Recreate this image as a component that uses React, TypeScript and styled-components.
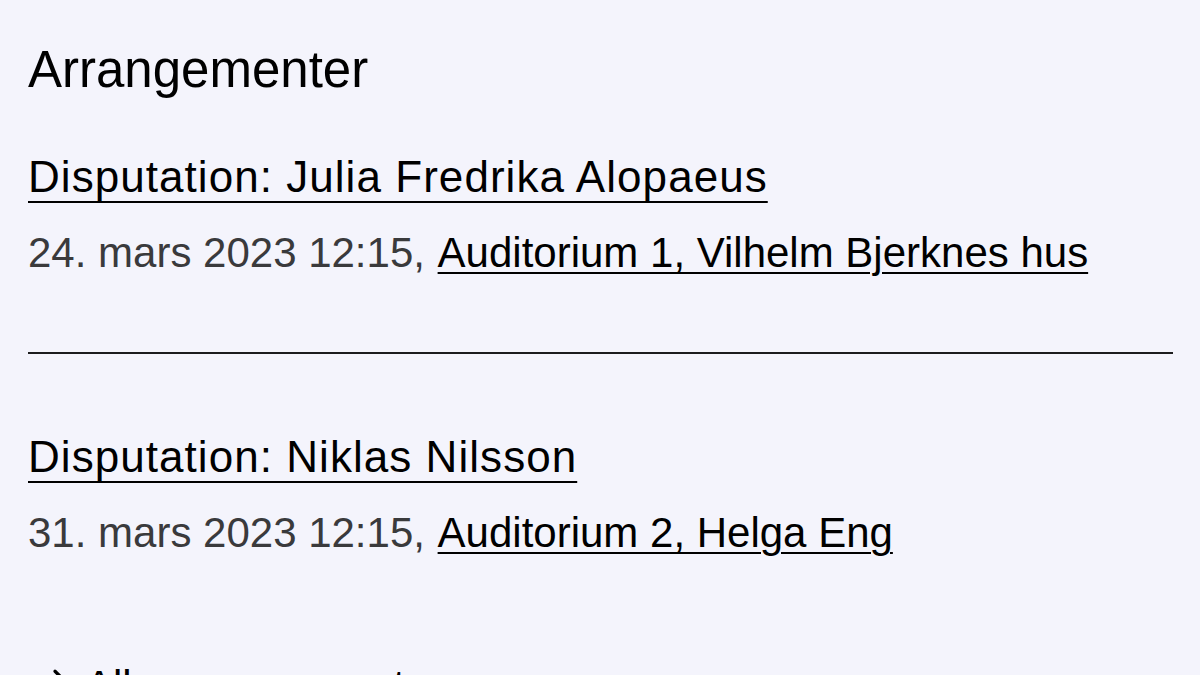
import { ArrowRight } from "lucide-react"
import styled, { createGlobalStyle } from "styled-components"

const GlobalStyle = createGlobalStyle`
  html, body {
    margin: 0;
    padding: 0;
    background: #f4f4fc;
  }
  body {
    font-family: "Liberation Sans", Helvetica, Arial, sans-serif;
    color: #000;
    overflow: hidden;
  }
`

const Page = styled.main`
  padding: 40px 27px 0 28px;
`

const Heading = styled.h2`
  margin: 0;
  font-size: 51px;
  line-height: 60px;
  font-weight: 400;
`

const EventList = styled.div`
  display: flex;
  flex-direction: column;
`

const Event = styled.article<{ $first?: boolean }>`
  display: flex;
  flex-direction: column;
  gap: 25px;
  padding-top: ${(p) => (p.$first ? "51px" : "77px")};
`

const EventTitle = styled.a`
  align-self: flex-start;
  font-size: 44px;
  line-height: 52px;
  letter-spacing: 1.05px;
  color: #000;
  text-decoration: underline;
  text-decoration-thickness: 2px;
  text-underline-offset: 9px;
`

const Meta = styled.p`
  margin: 0;
  font-size: 42px;
  line-height: 50px;
  color: #3a3a3c;
`

const Place = styled.a`
  margin-left: 1px;
  color: #000;
  text-decoration: underline;
  text-decoration-thickness: 2px;
  text-underline-offset: 5px;
`

const Divider = styled.hr`
  margin: 74px 0 0;
  border: 0;
  height: 2px;
  background: #1c1c1e;
`

const MoreLink = styled.a`
  display: flex;
  align-items: flex-start;
  gap: 15px;
  margin-top: 103px;
  margin-left: 12px;
  font-size: 42px;
  line-height: 50px;
  color: #000;
  text-decoration: none;

  svg {
    margin-top: 4px;
    flex-shrink: 0;
  }
`

const events = [
  {
    title: "Disputation: Julia Fredrika Alopaeus",
    date: "24. mars 2023 12:15",
    place: "Auditorium 1, Vilhelm Bjerknes hus",
  },
  {
    title: "Disputation: Niklas Nilsson",
    date: "31. mars 2023 12:15",
    place: "Auditorium 2, Helga Eng",
  },
]

export default function App() {
  return <>
    <GlobalStyle />
    <Page>
      <Heading>Arrangementer</Heading>
      <EventList>
        {events.map((e, i) => <div key={e.title}>
          {i > 0 && <Divider />}
          <Event $first={i === 0}>
            <EventTitle href="#">{e.title}</EventTitle>
            <Meta>
              {e.date}, <Place href="#">{e.place}</Place>
            </Meta>
          </Event>
        </div>)}
      </EventList>
      <MoreLink href="#">
        <ArrowRight size={30} strokeWidth={2.6} />
        Alle arrangementer
      </MoreLink>
    </Page>
  </>
}
